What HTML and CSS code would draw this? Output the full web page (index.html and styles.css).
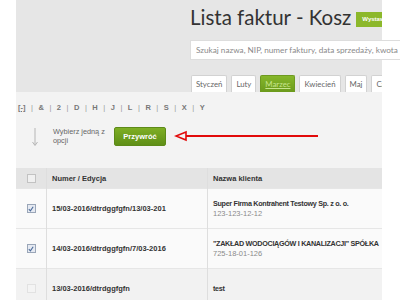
FILE: index.html
```html
<!DOCTYPE html>
<html lang="pl">
<head>
    <meta charset="UTF-8">
    <title>Lista faktur - Kosz</title>
    <link rel="stylesheet" href="styles.css">
</head>
<body>
    <div class="page">
        <div class="top">
            <div class="title-row">
                <h1>Lista faktur - Kosz</h1>
                <a class="btn-add" href="#">Wystaw fakturę</a>
            </div>
            <div class="search">
                <input type="text" placeholder="Szukaj nazwa, NIP, numer faktury, data sprzedaży, kwota">
            </div>
            <ul class="tabs">
                <li><a href="#">Styczeń</a></li>
                <li><a href="#">Luty</a></li>
                <li class="active"><a href="#">Marzec</a></li>
                <li><a href="#">Kwiecień</a></li>
                <li><a href="#">Maj</a></li>
                <li><a href="#">Czerwiec</a></li>
            </ul>
        </div>

        <div class="content">
            <div class="letters">
                <a class="all" href="#">[-]</a><span class="sep">|</span><a href="#">&amp;</a><span class="sep">|</span><a href="#">2</a><span class="sep">|</span><a href="#">D</a><span class="sep">|</span><a href="#">H</a><span class="sep">|</span><a href="#">J</a><span class="sep">|</span><a href="#">L</a><span class="sep">|</span><a href="#">R</a><span class="sep">|</span><a href="#">S</a><span class="sep">|</span><a href="#">X</a><span class="sep">|</span><a href="#">Y</a>
            </div>

            <div class="actions">
                <svg class="down" width="8" height="20" viewBox="0 0 8 20">
                    <path d="M4 1 V18 M1.5 15 L4 18.5 L6.5 15" fill="none" stroke="#b5b5b5" stroke-width="1"/>
                </svg>
                <p class="hint">Wybierz jedną z<br>opcji</p>
                <a class="btn-restore" href="#">Przywróć</a>
                <svg class="red-arrow" width="146" height="12" viewBox="0 0 146 12">
                    <path d="M12 6 H144" stroke="#e20a0a" stroke-width="2"/>
                    <path d="M12 2 L2 6 L12 10 Z" fill="none" stroke="#e20a0a" stroke-width="1.6" stroke-linejoin="miter"/>
                </svg>
            </div>

            <table class="invoices">
                <thead>
                    <tr>
                        <th class="col-check"><span class="box"></span></th>
                        <th class="col-num">Numer / Edycja</th>
                        <th>Nazwa klienta</th>
                    </tr>
                </thead>
                <tbody>
                    <tr>
                        <td class="col-check"><span class="box checked"><svg width="6" height="6" viewBox="0 0 6 6"><path d="M0.8 3.2 L2.4 4.8 L5.2 0.8" fill="none" stroke="#4a6a9a" stroke-width="1.1"/></svg></span></td>
                        <td class="col-num">15/03-2016/dtrdggfgfn/13/03-201</td>
                        <td>
                            <div class="client">Super Firma Kontrahent Testowy Sp. z o. o.</div>
                            <div class="nip">123-123-12-12</div>
                        </td>
                    </tr>
                    <tr>
                        <td class="col-check"><span class="box checked"><svg width="6" height="6" viewBox="0 0 6 6"><path d="M0.8 3.2 L2.4 4.8 L5.2 0.8" fill="none" stroke="#4a6a9a" stroke-width="1.1"/></svg></span></td>
                        <td class="col-num">14/03-2016/dtrdggfgfn/7/03-2016</td>
                        <td>
                            <div class="client">"ZAKŁAD WODOCIĄGÓW I KANALIZACJI" SPÓŁKA</div>
                            <div class="nip">725-18-01-126</div>
                        </td>
                    </tr>
                    <tr class="muted">
                        <td class="col-check"><span class="box disabled"></span></td>
                        <td class="col-num">13/03-2016/dtrdggfgfn</td>
                        <td><div class="client">test</div></td>
                    </tr>
                </tbody>
            </table>
        </div>
    </div>
</body>
</html>
```

FILE: styles.css
```css
body {
    margin: 0;
    padding: 0;
    background-color: #fff;
    font-family: "Liberation Sans", Arial, sans-serif;
}
.page {
    width: 366px;
    margin-left: 16px;
}
.top {
    background-color: #e6e6e6;
    padding-left: 174px;
    height: 92px;
}
.title-row {
    display: flex;
    width: 192px;
    height: 24px;
    padding-top: 5px;
    overflow: hidden;
    white-space: nowrap;
}
h1 {
    margin: 0;
    font-family: Lato, sans-serif;
    font-weight: normal;
    font-size: 20.5px;
    line-height: 24px;
    color: #333;
}
.btn-add {
    align-self: flex-end;
    margin: 0 0 2px 5px;
    height: 15px;
    line-height: 15px;
    padding: 0 6px;
    background-color: #8cb82b;
    color: #fff;
    font-size: 6px;
    font-weight: bold;
    text-decoration: none;
}
.search {
    margin-top: 11px;
    width: 210px;
}
.search input {
    display: block;
    width: 100%;
    height: 20px;
    box-sizing: border-box;
    border: 1px solid #ddd;
    border-right: none;
    padding: 0 0 0 5px;
    background-color: #fff;
    font-family: Lato, sans-serif;
    font-size: 8.2px;
}
.search input::placeholder {
    color: #8a8a8a;
}
.tabs {
    display: flex;
    gap: 4px;
    list-style: none;
    margin: 15px 0 0 1px;
    padding: 0;
    width: 191px;
    overflow: hidden;
    white-space: nowrap;
}
.tabs li {
    flex-shrink: 0;
}
.tabs li a {
    display: block;
    height: 17px;
    box-sizing: border-box;
    padding: 0 4px;
    line-height: 17px;
    border: 1px solid #d2d2d2;
    border-bottom: none;
    border-radius: 2px 2px 0 0;
    background-color: #fff;
    color: #666;
    font-family: Lato, sans-serif;
    font-size: 7.8px;
    text-decoration: none;
}
.tabs li.active a {
    background: linear-gradient(#86b72a, #6b9a1c);
    border-color: #6e9a20;
    color: #c8e58e;
    text-decoration: underline;
}
.content {
    background-color: #f3f3f3;
    height: 208px;
    overflow: hidden;
}
.letters {
    padding: 10px 0 0 2px;
    height: 12px;
    line-height: 12px;
    font-size: 7.5px;
    font-weight: bold;
    color: #777;
}
.letters a {
    color: #777;
    text-decoration: none;
}
.letters a.all {
    text-decoration: underline;
}
.letters .sep {
    margin: 0 5.5px;
    font-weight: normal;
    color: #999;
}
.actions {
    display: flex;
    align-items: center;
    height: 24px;
    margin-top: 10px;
    padding-left: 15px;
}
.down {
    display: block;
    margin-top: 2px;
}
.hint {
    margin: 0 0 0 14px;
    width: 61px;
    font-size: 7.3px;
    line-height: 9.5px;
    color: #666;
}
.btn-restore {
    display: block;
    width: 52px;
    height: 19px;
    box-sizing: border-box;
    line-height: 18px;
    text-align: center;
    background: linear-gradient(#7eae24, #5f8f17);
    border: 1px solid #5d8a18;
    border-radius: 2px;
    color: #fff;
    font-size: 7.5px;
    font-weight: bold;
    text-decoration: none;
}
.red-arrow {
    display: block;
    margin-left: 8px;
}
.invoices {
    margin-top: 20px;
    width: 366px;
    border-collapse: collapse;
    table-layout: fixed;
    font-size: 7.5px;
    color: #333;
}
.invoices th, .invoices td {
    padding: 0 0 0 5px;
    text-align: left;
    white-space: nowrap;
    overflow: hidden;
    border-left: 1px solid #dedede;
    font-weight: bold;
}
.invoices th {
    height: 20px;
    background-color: #e4e4e4;
}
.invoices td {
    height: 39px;
    background-color: #fafafa;
    border-top: 1px solid #e6e6e6;
}
.invoices tr.muted td {
    background-color: #f2f2f2;
}
.invoices .col-check {
    width: 30px;
    border-left: none;
    text-align: center;
    padding: 0;
}
.invoices .col-num {
    width: 155px;
}
.box {
    display: inline-block;
    width: 7px;
    height: 7px;
    border: 1px solid #c2c2c2;
    background-color: #f0f0f0;
    vertical-align: middle;
    position: relative;
}
.box.checked {
    border-color: #9aa6b8;
    background-color: #e6eaf2;
}
.box svg {
    position: absolute;
    left: 0.5px;
    top: 0.5px;
}
.box.disabled {
    border-color: #e2e2e2;
    background-color: #f4f4f4;
}
.client {
    line-height: 10px;
    font-size: 7.2px;
    letter-spacing: -0.3px;
}
.nip {
    font-weight: normal;
    color: #8a8a8a;
    line-height: 10px;
}
```
